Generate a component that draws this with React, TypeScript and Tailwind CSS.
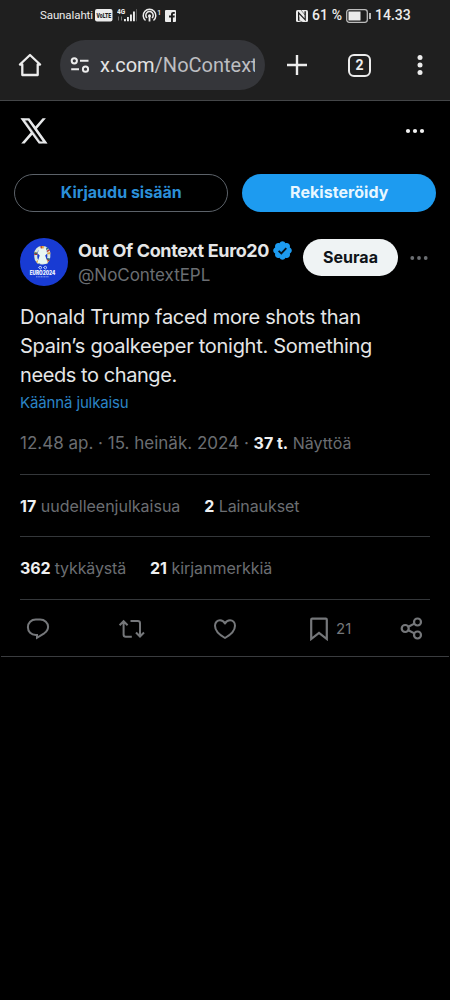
import React from "react";

const ROBOTO = "font-['Roboto',sans-serif]";

function StatusBar() {
  return (
    <div className="flex h-[30px] items-center pl-[40px] pr-[39px] pt-px text-[#ececec]">
      <span className="w-[53px] whitespace-nowrap text-[11.500px] tracking-[-0.1px]">Saunalahti</span>
      <svg className="ml-[2px]" width="18" height="13" viewBox="0 0 18 13">
        <rect width="17.500" height="12.500" rx="2" fill="#ececec" />
        <text x="1.500" y="9.200" textLength="14.500" lengthAdjust="spacingAndGlyphs" fontSize="7.500" fontWeight="900" fontFamily="Roboto" fill="#1f1f1f">VoLTE</text>
      </svg>
      <svg className="ml-[4px]" width="20" height="15" viewBox="0 0 20 15" fill="#ececec">
        <text x="0" y="6" fontSize="6.5" fontWeight="800" fontFamily="Roboto">4G</text>
        <path d="M1 8.5h1v4H1zM4 8.5h1v4H4z" opacity=".4" />
        <path d="M7 11h1.900v2.300H7zM10 9h1.900v4.300H10zM13 6.500h1.900v6.800H13zM16 3.500h1.900v9.800H16z" />
        <path d="M19 1h1v12.300h-1z" opacity=".3" />
      </svg>
      <svg className="ml-[5px]" width="20" height="15" viewBox="0 0 20 15" fill="none" stroke="#ececec" strokeWidth="1.500">
        <path d="M3.500 12.500a6.300 6.300 0 1 1 8 0M5 10a3.700 3.700 0 1 1 5 0" />
        <circle cx="7.500" cy="7.700" r="1.500" fill="#ececec" stroke="none" />
        <path d="M7.500 8v5.500" strokeWidth="1.800" />
        <text x="15" y="6.500" fontSize="7.500" fontWeight="500" fontFamily="Roboto" fill="#ececec" stroke="none">1</text>
      </svg>
      <svg className="ml-[3px]" width="11" height="12" viewBox="0 0 11 12">
        <rect width="11" height="12" rx="1" fill="#ececec" />
        <path d="M6 12V7.400H4V5.600h2V4.200C6 2.700 7 2 8.200 2H9.800v1.700H8.700c-.6 0-.8.300-.8.900v1h1.900l-.3 1.800H7.900V12z" fill="#1f1f1f" />
      </svg>
      <div className="flex-1" />
      <svg width="12" height="12" viewBox="0 0 12 12">
        <rect width="12" height="12" rx="1.500" fill="#ececec" />
        <path d="M2.600 10.800V2.800l6.600 7V1.300" fill="none" stroke="#1f1f1f" strokeWidth="1.200" />
        <path d="M5 0 9 5V1.500M3 7v3.500l3.500 1.500" fill="none" stroke="#1f1f1f" strokeWidth=".5" />
      </svg>
      <span className="ml-[4px] w-[31px] whitespace-nowrap text-[14px] font-medium tracking-[0.15px]">61 %</span>
      <svg className="ml-[3px]" width="25" height="14" viewBox="0 0 25 14">
        <rect x=".7" y=".7" width="20.600" height="12.600" rx="2.500" fill="none" stroke="#bcbcbc" strokeWidth="1.300" />
        <rect x="2.500" y="2.500" width="12" height="9" fill="#ececec" />
        <path d="M24 4v6" stroke="#ececec" strokeWidth="1.500" />
      </svg>
      <span className="ml-[4px] w-[36px] whitespace-nowrap text-[14px] font-medium">14.33</span>
    </div>
  );
}

function Toolbar() {
  return (
    <div className="flex h-[70px] items-center pl-[18px]">
      <svg width="24" height="24" viewBox="0 0 24 24" fill="none" stroke="#ececec" strokeWidth="2.300" strokeLinejoin="round" strokeLinecap="round">
        <path d="M4.300 11.500H1.900L12 2l10.100 9.500h-2.400V22H4.300z" />
      </svg>
      <div className="ml-[18px] flex h-[50px] w-[205px] items-center rounded-full bg-[#35363a] pl-[10px]">
        <svg width="20" height="16" viewBox="0 0 20 16" fill="none" stroke="#ececec" strokeWidth="2">
          <circle cx="4.300" cy="3.800" r="2.600" />
          <path d="M10 3.800h8.500M1.200 12.200H9" />
          <circle cx="15.500" cy="12.200" r="2.600" />
        </svg>
        <div className="ml-[10px] w-[155px] overflow-hidden whitespace-nowrap text-[20px] leading-[28px] text-[#bdbec1]">
          <span className="text-[#e3e3e3]">x.com</span>/NoContext
        </div>
      </div>
      <svg className="ml-[22px]" width="20" height="20" viewBox="0 0 20 20" stroke="#ececec" strokeWidth="2.400">
        <path d="M10 0v20M0 10h20" />
      </svg>
      <div className="ml-[41px] flex h-[23px] w-[23px] items-center justify-center rounded-[6px] border-[2.400px] border-[#ececec] text-[14px] font-bold leading-none text-[#ececec]">
        2
      </div>
      <svg className="ml-[46px]" width="6" height="20" viewBox="0 0 6 20" fill="#ececec">
        <circle cx="3" cy="2.500" r="2.500" />
        <circle cx="3" cy="10" r="2.500" />
        <circle cx="3" cy="17.500" r="2.500" />
      </svg>
    </div>
  );
}

function Avatar() {
  return (
    <svg className="shrink-0" width="48" height="48" viewBox="0 0 48 48">
      <circle cx="24" cy="24" r="24" fill="#183bd3" />
      <rect x="15.800" y="9.500" width="13" height="15.500" rx="6" fill="none" stroke="#dce9df" strokeWidth="3" />
      <rect x="15.800" y="9.500" width="13" height="15.500" rx="6" fill="none" stroke="#e2a73d" strokeWidth="3" strokeDasharray="2 7" />
      <rect x="15.800" y="9.500" width="13" height="15.500" rx="6" fill="none" stroke="#ad3438" strokeWidth="3" strokeDasharray="1.500 8" strokeDashoffset="3" />
      <rect x="15.800" y="9.500" width="13" height="15.500" rx="6" fill="none" stroke="#2f6a78" strokeWidth="3" strokeDasharray="1.500 9" strokeDashoffset="6" />
      <path d="M19 10.500h7l1.200 5-2 2 1 3 1.500 5h-10.500l1.500-5 1-3-2-2z" fill="#e9f7f3" />
      <path d="M18.500 29.500q1.500-2.500 3.500 0-1.500 3-3.500 0m5 0q2-2.500 3.500 0-1.500 3-3.500 0" fill="none" stroke="#c8d8ff" strokeWidth="1" />
      <text x="22.500" y="36.900" textAnchor="middle" textLength="25.500" lengthAdjust="spacingAndGlyphs" fontSize="5.500" fontWeight="900" fontFamily="Inter" fill="#eef3ff">EURO2024</text>
      <path d="M16 38.800h13" stroke="#a9baf5" strokeWidth=".8" strokeDasharray="1.200 .4" />
    </svg>
  );
}

function Dots({ className, gap, r }: { className: string; gap: number; r: number }) {
  return (
    <svg className={className} width="20" height="6" viewBox="0 0 20 6" fill="currentColor">
      <circle cx={10 - gap} cy="3" r={r} />
      <circle cx="10" cy="3" r={r} />
      <circle cx={10 + gap} cy="3" r={r} />
    </svg>
  );
}

function Verified() {
  return (
    <svg className="shrink-0" width="19" height="19" viewBox="1.500 1.500 21 21">
      <path
        fill="#1d9bf0"
        d="M22.250 12c0-1.430-.880-2.670-2.190-3.340.46-1.390.2-2.900-.810-3.910s-2.520-1.270-3.910-.810c-.66-1.310-1.910-2.190-3.340-2.190s-2.670.880-3.330 2.190c-1.400-.46-2.910-.2-3.920.81s-1.260 2.520-.8 3.910C2.640 9.330 1.750 10.570 1.750 12s.89 2.670 2.200 3.340c-.46 1.390-.21 2.900.8 3.910s2.520 1.260 3.910.81c.67 1.310 1.910 2.190 3.340 2.190s2.680-.88 3.340-2.190c1.390.45 2.900.2 3.910-.81s1.270-2.520.81-3.910c1.310-.67 2.190-1.910 2.190-3.340z"
      />
      <path d="m7.700 12.300 3 3 5.500-6" fill="none" stroke="#06131d" strokeWidth="2" />
    </svg>
  );
}

function Actions() {
  return (
    <div className="mx-[20px] flex h-[57px] items-center text-[#75777a]">
      <svg className="ml-[6px]" width="24" height="24" viewBox="0 0 24 24" fill="none" stroke="currentColor" strokeWidth="2">
        <path d="M11 20.800v-2.900H9.800C5.200 17.900 1.900 14.800 1.900 10.300c0-4.400 3.300-7.700 7.900-7.700h4.300c4.600 0 8 3.300 8 7.200 0 2.900-1.600 4.900-3.900 6.500z" />
      </svg>
      <svg className="ml-[68px]" width="28" height="24" viewBox="0 0 28 24" fill="none" stroke="currentColor" strokeWidth="2">
        <path d="m1.600 8.200 4-4 4 4M5.600 4.800v12.700q0 2.200 2.200 2.200h6M12.500 4H19.800q2.200 0 2.200 2.200v13M18 15.500l4 4 4-4" />
      </svg>
      <svg className="ml-[67px]" width="24" height="24" viewBox="0 0 24 24" fill="none" stroke="currentColor" strokeWidth="2" strokeLinejoin="round">
        <path d="M12 21C7 18.200 2 14 2 8.800 2 5.500 4.300 3.300 7 3.300c2.100 0 3.800 1 5 3.200 1.200-2.200 2.900-3.200 5-3.200 2.700 0 5 2.200 5 5.500C22 14 17 18.200 12 21z" />
      </svg>
      <svg className="ml-[73px]" width="18" height="24" viewBox="0 0 18 24" fill="none" stroke="currentColor" strokeWidth="2.200">
        <path d="M1.200 2.700q0-1 1-1h13.600q1 0 1 1V22L9 16l-7.800 6z" />
      </svg>
      <span className="ml-[8px] mt-[2px] w-[17px] text-[15px]">21</span>
      <svg className="ml-[47px]" width="23" height="23" viewBox="0 0 23 23" fill="none" stroke="currentColor" strokeWidth="2.200">
        <circle cx="5.200" cy="11.500" r="3.500" />
        <circle cx="17.500" cy="5" r="3.500" />
        <circle cx="17.500" cy="18" r="3.500" />
        <path d="m8.300 9.800 6.100-3.200m-6.100 6.600 6.100 3.200" />
      </svg>
    </div>
  );
}

export default function App() {
  return (
    <div className="h-[1000px] w-[450px] overflow-hidden bg-black font-['Inter',sans-serif] text-[#e5e6e7]">
      <header className={`${ROBOTO} h-[101px] border-b border-[#444648] bg-[#1f1f1f]`}>
        <StatusBar />
        <Toolbar />
      </header>

      <div className="flex h-[60px] items-center justify-between pl-[20px] pr-[25px]">
        <svg width="28" height="26" viewBox="0 0 28 26" fill="#e7e9ea" fillRule="evenodd">
          <path d="M.5.300h8.800l6.100 8.300L22.600.3h3.300l-9 10.400L27.500 25.500h-8.700l-6.500-8.800-7.700 8.800H1.200l9.500-10.900zM4.900 2.600l14.900 20.800h3L8 2.600z" />
          <path d="M.5.300h3.600l18 25.200h-3.300zM8.100 2.100l1.400-1.600 18 25h-3z" opacity=".35" />
        </svg>
        <Dots className="text-[#f2f2f2]" gap={7} r={2.1} />
      </div>

      <div className="flex gap-[14px] px-[14px] pt-[13px] text-[16px] font-bold">
        <button className="h-[38px] w-[215px] rounded-full border border-[#5c6269] pb-[3px] text-[#2b8fd8]">Kirjaudu sisään</button>
        <button className="h-[38px] w-[194px] rounded-full bg-[#1d9bf0] pb-[3px] tracking-[0.05px] text-[#e8f7ff]">Rekisteröidy</button>
      </div>

      <article>
        <div className="flex px-[20px] pt-[26px]">
          <Avatar />
          <div className="ml-[10px] w-[215px]">
            <div className="flex h-[25px] items-center gap-[3px]">
              <span className="w-[192px] whitespace-nowrap text-[18px] font-bold tracking-[-0.36px]">Out Of Context Euro20</span>
              <Verified />
            </div>
            <div className="text-[17px] leading-[24px] text-[#6b6e72] tracking-[-0.05px]">@NoContextEPL</div>
          </div>
          <button className="ml-[10px] mt-px h-[37px] w-[95px] rounded-full bg-[#eff3f4] pb-[2px] text-[16px] font-bold text-[#0f1419]">Seuraa</button>
          <Dots className="ml-[11px] mt-[17px] text-[#6b6e72]" gap={6.7} r={1.9} />
        </div>

        <div className="px-[20px]">
          <p className="mt-[16px] whitespace-nowrap text-[20px] leading-[29px] tracking-[-0.28px]">
            Donald Trump faced more shots than<br />
            Spain’s goalkeeper tonight. Something<br />
            <span className="tracking-[-0.42px]">needs to change.</span>
          </p>
          <div className="text-[15px] leading-[26px] tracking-[-0.13px] text-[#2b84c6]">Käännä julkaisu</div>
          <div className="mt-[14px] whitespace-nowrap text-[17px] leading-[26px] text-[#6b6e72]">
            12.48 ap. · 15. heinäk. 2024 · <span className="text-[16px]"><b className="text-[#eff0f1]">37 t.</b> Näyttöä</span>
          </div>
          <div className="mt-[18px] flex h-[63px] items-center gap-[24px] border-t border-[#34373a] text-[16px] text-[#6b6e72]">
            <span><b className="text-[#eff0f1]">17</b> uudelleenjulkaisua</span>
            <span className="tracking-[-0.1px]"><b className="text-[#eff0f1]">2</b> Lainaukset</span>
          </div>
          <div className="-mt-px flex h-[64px] items-center gap-[24px] border-y border-[#34373a] text-[16px] tracking-[-0.1px] text-[#6b6e72]">
            <span className="tracking-[-0.15px]"><b className="text-[#eff0f1]">362</b> tykkäystä</span>
            <span className="tracking-[-0.03px]"><b className="text-[#eff0f1]">21</b> kirjanmerkkiä</span>
          </div>
        </div>
        <Actions />
        <div className="-mt-px mx-px h-px bg-[#3a3c3f]" />
      </article>
    </div>
  );
}
